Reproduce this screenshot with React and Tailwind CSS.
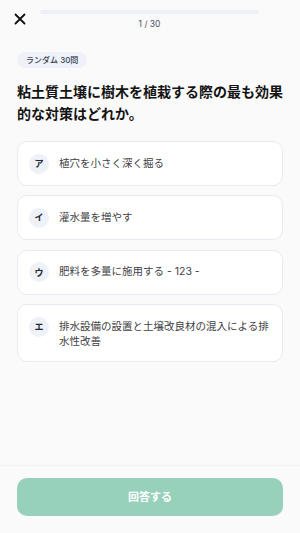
import React from "react";

const options = [
  { k: "ア", t: "植穴を小さく深く掘る" },
  { k: "イ", t: "灌水量を増やす" },
  { k: "ウ", t: "肥料を多量に施用する - 123 -" },
  { k: "エ", t: "排水設備の設置と土壌改良材の混入による排水性改善" },
];

export default function App() {
  return (
    <div
      className="min-h-[533px] w-[300px] flex flex-col bg-[#fafafa] text-[#111]"
      style={{ fontFamily: 'Inter, "Noto Sans CJK JP", sans-serif' }}
    >
      <div className="flex items-start px-[14px] pt-[10px]">
        <svg width="12" height="12" viewBox="0 0 12 12" className="mt-[3px] shrink-0">
          <path d="M1.5 1.5 L10.5 10.5 M10.5 1.5 L1.5 10.5" stroke="#111" strokeWidth="1.8" strokeLinecap="round" />
        </svg>
        <div className="ml-[14px] mr-[27px] flex-1 flex flex-col items-center">
          <div className="h-[4px] w-full rounded-full bg-[#edf1f7]" />
          <div className="mt-[4px] text-[8.5px] leading-[12px] text-[#4b5563]">1 / 30</div>
        </div>
      </div>

      <div className="flex-1 px-[17px] pt-[15px]">
        <div className="inline-flex h-[16px] items-center rounded-full bg-[#eef2f8] px-[9px] text-[8px] font-medium text-[#374151]">
          ランダム 30問
        </div>
        <div className="mt-[12px] text-[14px] font-bold leading-[22px] text-[#141414]">
          粘土質土壌に樹木を植栽する際の最も効果的な対策はどれか。
        </div>
        <div className="mt-[16px] flex flex-col gap-[9.4px]">
          {options.map((o) => (
            <div
              key={o.k}
              className="flex items-start gap-[10px] rounded-[10px] border border-[#e6eaf1] bg-white px-[11px] py-[11.5px]"
            >
              <div className="flex h-[20px] w-[20px] shrink-0 items-center justify-center rounded-full bg-[#eef2f8] text-[9px] font-bold text-[#1f2937]">
                {o.k}
              </div>
              <div className="mt-[2px] text-[10.5px] leading-[15.5px] text-[#3f3f46]">{o.t}</div>
            </div>
          ))}
        </div>
      </div>

      <div className="border-t border-[#f0f1f4] px-[17px] pt-[12px] pb-[17px]">
        <button className="flex h-[38px] w-full items-center justify-center rounded-[10px] bg-[#98d1bb] text-[11px] font-bold text-white">
          回答する
        </button>
      </div>
    </div>
  );
}
